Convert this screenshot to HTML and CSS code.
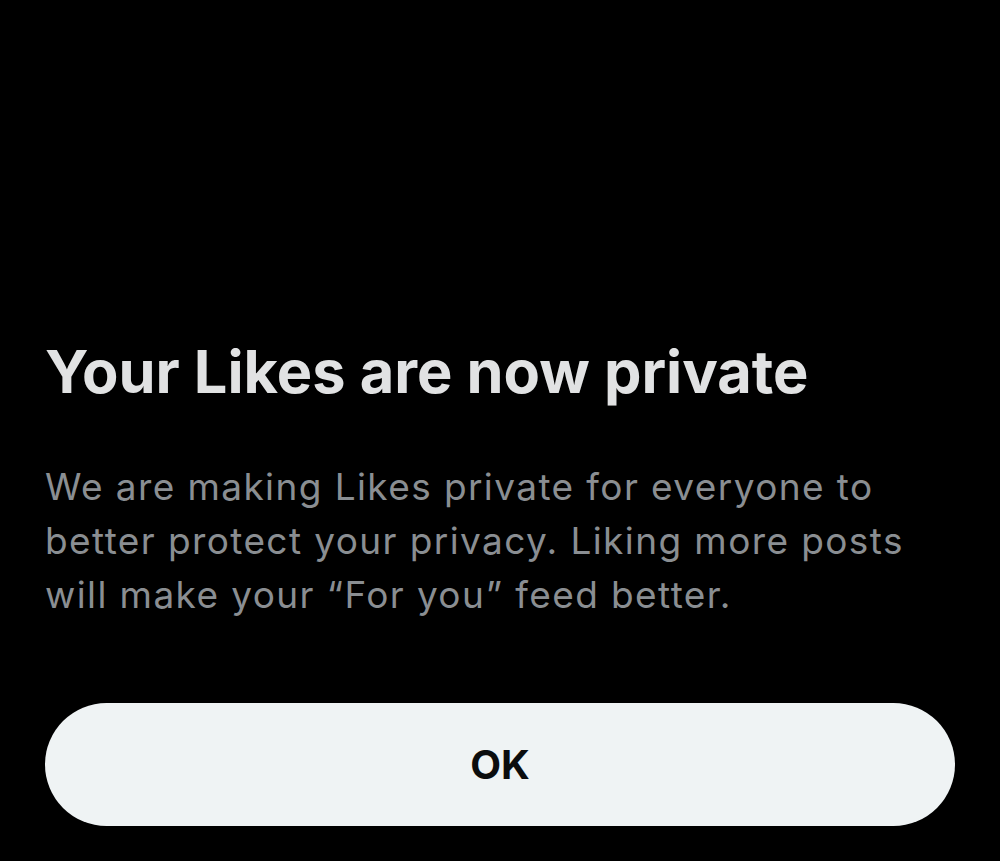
FILE: index.html
```html
<!DOCTYPE html>
<html lang="en">
<head>
  <meta charset="UTF-8">
  <title>Your Likes are now private</title>
  <link rel="stylesheet" href="styles.css">
</head>
<body>
  <div class="sheet">
    <h1 class="title">Your Likes are now private</h1>
    <p class="text">We are making Likes private for everyone to better protect your privacy. Liking more posts will make your “For you” feed better.</p>
    <button class="ok-btn">OK</button>
  </div>
</body>
</html>
```

FILE: styles.css
```css
body {
  margin: 0;
  background: #000;
  font-family: 'Inter', 'Liberation Sans', sans-serif;
}
.sheet {
  width: 1000px;
  height: 861px;
  box-sizing: border-box;
  padding: 331px 45px 0 45px;
  display: flex;
  flex-direction: column;
}
.title {
  margin: 0;
  font-size: 59.5px;
  line-height: 80px;
  font-weight: 700;
  color: #e1e2e3;
}
.text {
  margin: 49px 0 0 0;
  width: 880px;
  font-size: 37px;
  line-height: 54px;
  letter-spacing: 1.4px;
  color: #8a8e92;
}
.ok-btn {
  margin-top: 81px;
  height: 123px;
  width: 910px;
  border: none;
  border-radius: 62px;
  background: #eff3f4;
  color: #0b0d0e;
  font-family: inherit;
  font-size: 40px;
  font-weight: 700;
  cursor: pointer;
}
```
